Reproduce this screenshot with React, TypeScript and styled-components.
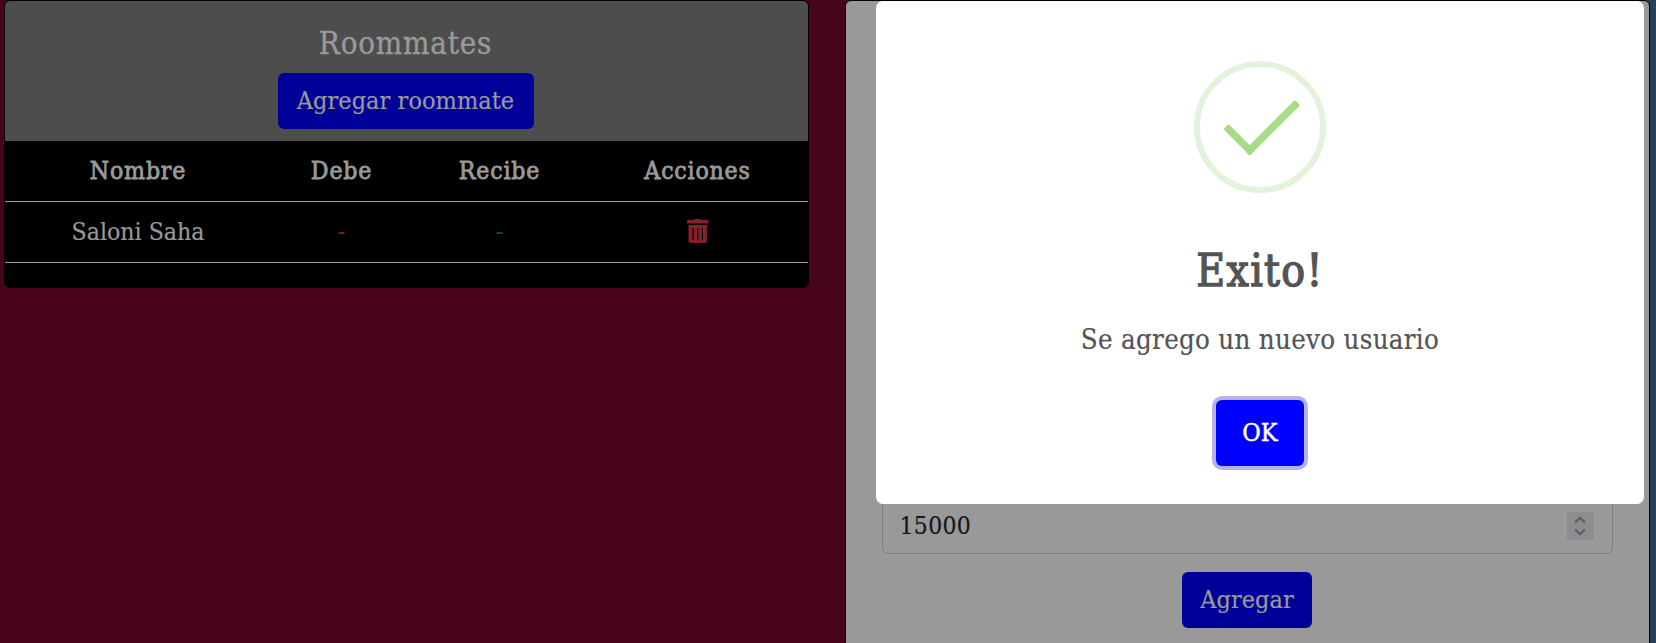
import React from 'react';
import styled, { createGlobalStyle } from 'styled-components';

const GlobalStyle = createGlobalStyle`
  *, *::before, *::after { box-sizing: border-box; }
  body {
    margin: 0;
    overflow: hidden;
    font-family: "DejaVu Serif Condensed", "DejaVu Serif", serif;
    font-stretch: condensed;
  }
`;

const Page = styled.main`
  position: relative;
  display: flex;
  align-items: flex-start;
  justify-content: space-between;
  height: 643px;
  padding: 0 0 0 4px;
  overflow: hidden;
  background: linear-gradient(90deg, #48041a 0, #48041a 800px, #46061e 846px, #25405a 1650px);
`;

const Card = styled.section`
  width: 805px;
  border: 1px solid #000;
  border-radius: 6px;
  background: #000;
  color: #999;
  overflow: hidden;
`;

const CardHeader = styled.header`
  display: flex;
  flex-direction: column;
  align-items: center;
  height: 140px;
  padding: 22px 2px 0 0;
  background: #4d4d4d;
`;

const CardTitle = styled.h2`
  margin: 0 0 10px;
  font-size: 31px;
  font-weight: 400;
  line-height: 40px;
  letter-spacing: 0.8px;
  -webkit-text-stroke: 0.4px;
`;

const Button = styled.button<{ $width: number }>`
  flex: none;
  width: ${({ $width }) => $width}px;
  height: 56px;
  padding: 0 0 2px;
  border: 0;
  border-radius: 6px;
  background: #000099;
  color: #999;
  font: inherit;
  font-size: 25px;
  letter-spacing: 0.05px;
  white-space: nowrap;
  -webkit-text-stroke: 0.2px;
`;

const Table = styled.table`
  width: 100%;
  margin-bottom: 24px;
  border-collapse: collapse;
  table-layout: fixed;
  font-size: 24.6px;
  text-align: center;
  -webkit-text-stroke: 0.2px;
`;

const Row = styled.tr<{ $height: number }>`
  height: ${({ $height }) => $height}px;
  border-bottom: 1px solid #999;
`;

const HeadCell = styled.th<{ $width: number }>`
  width: ${({ $width }) => $width}px;
  padding: 0 0 1px;
  font-weight: 400;
  letter-spacing: 0.8px;
  -webkit-text-stroke: 0.8px;
`;

const Cell = styled.td<{ $color?: string }>`
  padding: 0 0 1px;
  color: ${({ $color }) => $color ?? 'inherit'};
`;

const TrashIcon = styled.svg`
  display: block;
  margin: 0 auto;
  fill: #842029;
`;

const FormCard = styled(Card)`
  display: flex;
  flex-direction: column;
  align-items: center;
  justify-content: flex-end;
  height: 660px;
  margin-right: 6px;
  padding: 0 36px 31px 35px;
  background: #999;
`;

const AmountField = styled.label`
  display: flex;
  align-items: center;
  justify-content: space-between;
  width: 731px;
  height: 56px;
  margin: 0 0 18px;
  padding: 0 18px 0 17px;
  border: 1px solid #7e7e80;
  border-radius: 6px;
  color: #14171a;
  font-size: 24.5px;
  letter-spacing: 0.3px;
  -webkit-text-stroke: 0.2px;
`;

const Amount = styled.span`
  padding-bottom: 2px;
`;

const Stepper = styled.span`
  display: flex;
  align-items: center;
  justify-content: center;
  width: 27px;
  height: 28px;
  background: #8d8d90;
`;

const Modal = styled.div`
  position: absolute;
  top: 1px;
  left: 876px;
  display: flex;
  flex-direction: column;
  align-items: center;
  width: 768px;
  height: 503px;
  padding-top: 60px;
  border-radius: 7px;
  background: #fff;
  color: #545454;
`;

const ModalTitle = styled.h2`
  margin: 46px 0 0;
  font-size: 44px;
  font-weight: 400;
  line-height: 64px;
  letter-spacing: 1.3px;
  -webkit-text-stroke: 1.3px;
`;

const ModalText = styled.p`
  margin: 17px 0 0;
  font-size: 27.4px;
  line-height: 40px;
  letter-spacing: 0.3px;
  -webkit-text-stroke: 0.2px;
`;

const ConfirmButton = styled(Button)`
  height: 66px;
  margin-top: 40px;
  background: #0000ff;
  color: #fff;
  box-shadow: 0 0 0 4px #b6b1ea;
  -webkit-text-stroke: 0.5px;
`;

function SuccessIcon() {
  return (
    <svg width="132" height="132" viewBox="0 0 132 132">
      <circle cx="66" cy="66" r="63" fill="none" stroke="#e3f3db" strokeWidth="6" />
      <g transform="translate(55.7 89.4) rotate(-45)" fill="#a5dc86">
        <rect x="-3.7" y="-3.7" width="71.4" height="7.4" rx="2" />
        <rect x="-3.7" y="-33.8" width="7.4" height="37.5" rx="2" />
      </g>
    </svg>
  );
}

export default function App() {
  return (
    <>
      <GlobalStyle />
      <Page>
        <Card>
          <CardHeader>
            <CardTitle>Roommates</CardTitle>
            <Button $width={256}>Agregar roommate</Button>
          </CardHeader>
          <Table>
            <thead>
              <Row $height={60}>
                <HeadCell $width={266}>Nombre</HeadCell>
                <HeadCell $width={141}>Debe</HeadCell>
                <HeadCell $width={175}>Recibe</HeadCell>
                <HeadCell $width={221}>Acciones</HeadCell>
              </Row>
            </thead>
            <tbody>
              <Row $height={61}>
                <Cell>Saloni Saha</Cell>
                <Cell $color="#84152e">-</Cell>
                <Cell $color="#0f5132">-</Cell>
                <Cell>
                  <TrashIcon width="22" height="24" viewBox="0 0 22 24">
                    <path
                      fillRule="evenodd"
                      d="M1 1H7Q7.500 0 8.500 0H13Q14 0 14.500 1H20.500Q21.500 1 21.500 2V3.500Q21.500 4.500 20.500 4.500H1Q0 4.500 0 3.500V2Q0 1 1 1ZM1.500 6H20V21.500Q20 24 17.500 24H4Q1.500 24 1.500 21.500ZM5.500 9V21H6.700V9ZM10.200 9V21H11.400V9ZM14.800 9V21H16V9Z"
                    />
                  </TrashIcon>
                </Cell>
              </Row>
            </tbody>
          </Table>
        </Card>
        <FormCard>
          <AmountField>
            <Amount>15000</Amount>
            <Stepper>
              <svg width="12" height="20" viewBox="0 0 12 20" fill="none" stroke="#5e5e64" strokeWidth="2.4">
                <path d="M1 6.500L6 1.800L11 6.500M1 13.500L6 18.200L11 13.500" />
              </svg>
            </Stepper>
          </AmountField>
          <Button $width={130}>Agregar</Button>
        </FormCard>
        <Modal role="dialog">
          <SuccessIcon />
          <ModalTitle>Exito!</ModalTitle>
          <ModalText>Se agrego un nuevo usuario</ModalText>
          <ConfirmButton $width={88}>OK</ConfirmButton>
        </Modal>
      </Page>
    </>
  );
}
